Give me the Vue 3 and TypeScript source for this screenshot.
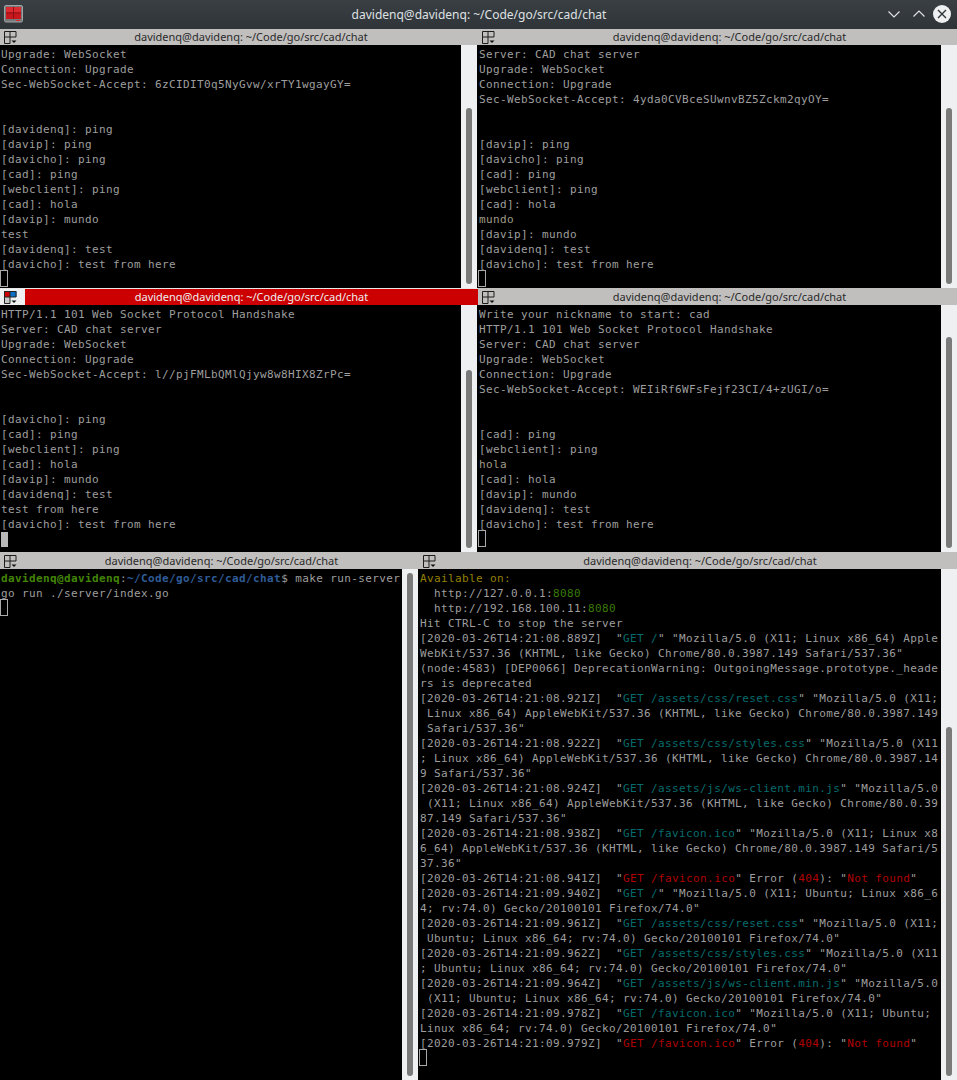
<script setup lang="ts">
type Seg = { t: string; c?: string }
type Line = string | Seg[]
interface Pane {
  id: string
  active?: boolean
  lines: Line[]
  cursor?: 'outline' | 'solid'
  thumbTop: number
}
const r = 'red', g = 'green', t = 'teal', y = 'yellow', p = 'pg', b = 'pb'
const ts = (stamp: string, cls: string, url: string, rest: string): Line => [
  { t: `[2020-03-26T14:21:${stamp}Z]  ` },
  { t: '"' },
  { t: `GET ${url}`, c: cls },
  { t: `"${rest}` }
]
const err = (stamp: string): Line => [
  { t: `[2020-03-26T14:21:${stamp}Z]  ` },
  { t: '"' },
  { t: 'GET /favicon.ico', c: r },
  { t: '" Error (' },
  { t: '404', c: r },
  { t: '): "' },
  { t: 'Not found', c: r },
  { t: '"' }
]
const panes: Pane[] = [
  { id: 'a', thumbTop: 63, cursor: 'outline', lines: ['Upgrade: WebSocket', 'Connection: Upgrade', 'Sec-WebSocket-Accept: 6zCIDIT0q5NyGvw/xrTY1wgayGY=', '', '', '[davidenq]: ping', '[davip]: ping', '[davicho]: ping', '[cad]: ping', '[webclient]: ping', '[cad]: hola', '[davip]: mundo', 'test', '[davidenq]: test', '[davicho]: test from here'] },
  { id: 'b', thumbTop: 63, cursor: 'outline', lines: ['Server: CAD chat server', 'Upgrade: WebSocket', 'Connection: Upgrade', 'Sec-WebSocket-Accept: 4yda0CVBceSUwnvBZ5Zckm2qyOY=', '', '', '[davip]: ping', '[davicho]: ping', '[cad]: ping', '[webclient]: ping', '[cad]: hola', [{ t: 'mundo', c: 'ol' }], '[davip]: mundo', '[davidenq]: test', '[davicho]: test from here'] },
  { id: 'c', active: true, thumbTop: 65, cursor: 'solid', lines: ['HTTP/1.1 101 Web Socket Protocol Handshake', 'Server: CAD chat server', 'Upgrade: WebSocket', 'Connection: Upgrade', 'Sec-WebSocket-Accept: l//pjFMLbQMlQjyw8w8HIX8ZrPc=', '', '', '[davicho]: ping', '[cad]: ping', '[webclient]: ping', '[cad]: hola', '[davip]: mundo', '[davidenq]: test', 'test from here', '[davicho]: test from here'] },
  { id: 'd', thumbTop: 32, cursor: 'outline', lines: ['Write your nickname to start: cad', 'HTTP/1.1 101 Web Socket Protocol Handshake', 'Server: CAD chat server', 'Upgrade: WebSocket', 'Connection: Upgrade', 'Sec-WebSocket-Accept: WEIiRf6WFsFejf23CI/4+zUGI/o=', '', '', '[cad]: ping', '[webclient]: ping', [{ t: 'hola', c: 'ol' }], '[cad]: hola', '[davip]: mundo', '[davidenq]: test', '[davicho]: test from here'] },
  { id: 'e', thumbTop: 4, cursor: 'outline', lines: [[{ t: 'davidenq@davidenq', c: p }, { t: ':' }, { t: '~/Code/go/src/cad/chat', c: b }, { t: '$ make run-server' }], 'go run ./server/index.go'] },
  { id: 'f', thumbTop: 158, cursor: 'outline', lines: [
    [{ t: 'Available on:', c: y }],
    [{ t: '  http://127.0.0.1:' }, { t: '8080', c: g }],
    [{ t: '  http://192.168.100.11:' }, { t: '8080', c: g }],
    'Hit CTRL-C to stop the server',
    ts('08.889', t, '/', ' "Mozilla/5.0 (X11; Linux x86_64) Apple'),
    'WebKit/537.36 (KHTML, like Gecko) Chrome/80.0.3987.149 Safari/537.36"',
    '(node:4583) [DEP0066] DeprecationWarning: OutgoingMessage.prototype._heade',
    'rs is deprecated',
    ts('08.921', t, '/assets/css/reset.css', ' "Mozilla/5.0 (X11;'),
    ' Linux x86_64) AppleWebKit/537.36 (KHTML, like Gecko) Chrome/80.0.3987.149',
    ' Safari/537.36"',
    ts('08.922', t, '/assets/css/styles.css', ' "Mozilla/5.0 (X11'),
    '; Linux x86_64) AppleWebKit/537.36 (KHTML, like Gecko) Chrome/80.0.3987.14',
    '9 Safari/537.36"',
    ts('08.924', t, '/assets/js/ws-client.min.js', ' "Mozilla/5.0'),
    ' (X11; Linux x86_64) AppleWebKit/537.36 (KHTML, like Gecko) Chrome/80.0.39',
    '87.149 Safari/537.36"',
    ts('08.938', t, '/favicon.ico', ' "Mozilla/5.0 (X11; Linux x8'),
    '6_64) AppleWebKit/537.36 (KHTML, like Gecko) Chrome/80.0.3987.149 Safari/5',
    '37.36"',
    err('08.941'),
    ts('09.940', t, '/', ' "Mozilla/5.0 (X11; Ubuntu; Linux x86_6'),
    '4; rv:74.0) Gecko/20100101 Firefox/74.0"',
    ts('09.961', t, '/assets/css/reset.css', ' "Mozilla/5.0 (X11;'),
    ' Ubuntu; Linux x86_64; rv:74.0) Gecko/20100101 Firefox/74.0"',
    ts('09.962', t, '/assets/css/styles.css', ' "Mozilla/5.0 (X11'),
    '; Ubuntu; Linux x86_64; rv:74.0) Gecko/20100101 Firefox/74.0"',
    ts('09.964', t, '/assets/js/ws-client.min.js', ' "Mozilla/5.0'),
    ' (X11; Ubuntu; Linux x86_64; rv:74.0) Gecko/20100101 Firefox/74.0"',
    ts('09.978', t, '/favicon.ico', ' "Mozilla/5.0 (X11; Ubuntu;'),
    'Linux x86_64; rv:74.0) Gecko/20100101 Firefox/74.0"',
    err('09.979')
  ] }
]
const segs = (l: Line): Seg[] => (typeof l === 'string' ? [{ t: l }] : l)
const title = 'davidenq@davidenq: ~/Code/go/src/cad/chat'
</script>

<template>
  <div class="win">
    <header class="titlebar">
      <svg class="appicon" width="19" height="18" viewBox="0 0 19 18">
        <rect x="0.500" y="0.500" width="18" height="16.500" rx="1.500" fill="#77797b" stroke="#a0a2a3" />
        <rect x="2" y="2" width="15" height="12" fill="#c8181e" />
        <rect x="2" y="2" width="15" height="5" fill="#dc2a30" />
        <path d="M9.500 2v12M2 8h15" stroke="#8e1015" />
        <rect x="12" y="15" width="4" height="1" fill="#d8272c" />
      </svg>
      <div class="wintitle">{{ title }}</div>
      <div class="controls">
        <svg class="ctl-down" width="12" height="7" viewBox="0 0 12 7"><path d="M.5 .5L6 6l5.500-5.500" fill="none" stroke="#e4e6e7" stroke-width="1.100" /></svg>
        <svg class="ctl-up" width="12" height="7" viewBox="0 0 12 7"><path d="M.5 6.500L6 1l5.500 5.500" fill="none" stroke="#e4e6e7" stroke-width="1.100" /></svg>
        <svg width="18" height="18" viewBox="0 0 18 18"><circle cx="9" cy="9" r="9" fill="#eff0f1" /><path d="M5 5l8 8M13 5l-8 8" stroke="#31363b" stroke-width="1.400" /></svg>
      </div>
    </header>
    <main class="grid">
      <section v-for="pane in panes" :key="pane.id" class="pane" :class="'p-' + pane.id">
        <div class="phead" :class="{ on: pane.active }">
          <div class="split" :class="{ on: pane.active }">
            <svg width="13" height="13" viewBox="0 0 13 13">
              <template v-if="pane.active">
                <rect x="0" y="0" width="6" height="6" fill="#cc0000" />
                <rect x="6" y="0" width="6.500" height="6" fill="#0a6fc2" />
                <rect x="0" y="6" width="6" height="6.500" fill="#c8c8c8" />
                <path d="M.5 .5h11.500M6 .5v12M.5 6h11.500M.5 .5v12h5.500M12 .5v5.500" fill="none" stroke="#222" />
                <path d="M7.500 9.500h5l-2.500 2.500z" fill="#111" />
              </template>
              <template v-else>
                <path d="M.5 .5h11.500v5.500H.5zM.5 6v6.500h5.500V.500" fill="none" stroke="#1c1c1c" />
                <path d="M7.500 9.500h5l-2.500 2.500z" fill="#111" />
              </template>
            </svg>
          </div>
          <div class="ptitle">{{ title }}</div>
        </div>
        <div class="pbody">
          <div class="term">
            <div v-for="(l, i) in pane.lines" :key="i" class="ln"><span v-for="(s, j) in segs(l)" :key="j" :class="s.c">{{ s.t }}</span></div>
            <div class="cur" :class="pane.cursor"></div>
          </div>
          <div class="track"><div class="thumb" :style="{ marginTop: pane.thumbTop + 'px' }"></div></div>
        </div>
      </section>
    </main>
  </div>
</template>

<style>
html, body { margin: 0; background: #000; }
</style>

<style scoped>
.win { width: 957px; height: 1080px; display: flex; flex-direction: column; overflow: hidden; background: #fff; }
.titlebar { height: 29px; flex: none; background: linear-gradient(#3a3f44, #2f3439); display: flex; align-items: center; position: relative; color: #dfe1e3; font: 12px "Noto Sans", sans-serif; }
.appicon { margin-left: 4px; margin-top: -1px; flex: none; }
.wintitle { position: absolute; left: 1px; right: 0; top: 6px; text-align: center; line-height: 17px; }
.controls { margin-left: auto; display: flex; align-items: center; padding-right: 6px; margin-top: -1px; }
.ctl-down { margin-right: 13px; }
.ctl-up { margin-right: 8px; margin-top: -2px; }
.grid { flex: 1; display: grid; grid-template-columns: 419px 59px 1fr; grid-template-rows: 259px 264px 528px; background: #eff0f1; }
.pane { display: flex; flex-direction: column; min-width: 0; min-height: 0; }
.p-a, .p-c { grid-column: 1 / span 2; }
.p-b, .p-d { grid-column: 3; }
.p-e { grid-column: 1; }
.p-f { grid-column: 2 / span 2; }
.phead { height: 17px; flex: none; box-sizing: border-box; padding-top: 1px; background: #c1bfbe; color: #2a2a2a; display: flex; align-items: center; font: 11px/16px "Noto Sans", sans-serif; }
.p-a .phead, .p-b .phead { height: 16px; padding-top: 0; }
.phead.on { background: #cc0000; color: #eee; border-top: 1px solid #e8e8e8; padding-top: 0; }
.split { width: 24px; height: 16px; flex: none; display: flex; align-items: center; padding-left: 4px; box-sizing: border-box; }
.split.on { background: #eff0f1; width: 25px; border-right: 1px solid #eee; }
.ptitle { flex: 1; text-align: center; white-space: nowrap; }
.pbody { flex: 1; min-height: 0; display: flex; background: #000; }
.term { flex: 1; min-width: 0; overflow: hidden; color: #9e9e9e; font: 11px/15px "DejaVu Sans Mono", monospace; letter-spacing: 0.380px; padding: 2px 0 0 1px; white-space: pre; }
.ln { height: 15px; }
.cur { box-sizing: border-box; }
.cur.outline { width: 8px; height: 17px; margin: -2px 0 0 -1px; border: 1px solid #aaa; }
.cur.solid { width: 7px; height: 15px; background: #b8b8b8; }
.track { width: 16px; flex: none; background: #eff0f1; display: flex; justify-content: center; }
.p-a .track, .p-c .track, .p-e .track { margin-right: 1px; }
.thumb { width: 6px; flex: none; margin-bottom: 4px; background: #7a7a7a; border-radius: 3px; }
.red { color: #b00000; }
.green { color: #3a7a06; }
.teal { color: #056c6e; }
.yellow { color: #948000; }
.ol { color: #a09c88; }
.pg { color: #438506; font-weight: bold; }
.pb { color: #2f5c96; font-weight: bold; }
</style>
